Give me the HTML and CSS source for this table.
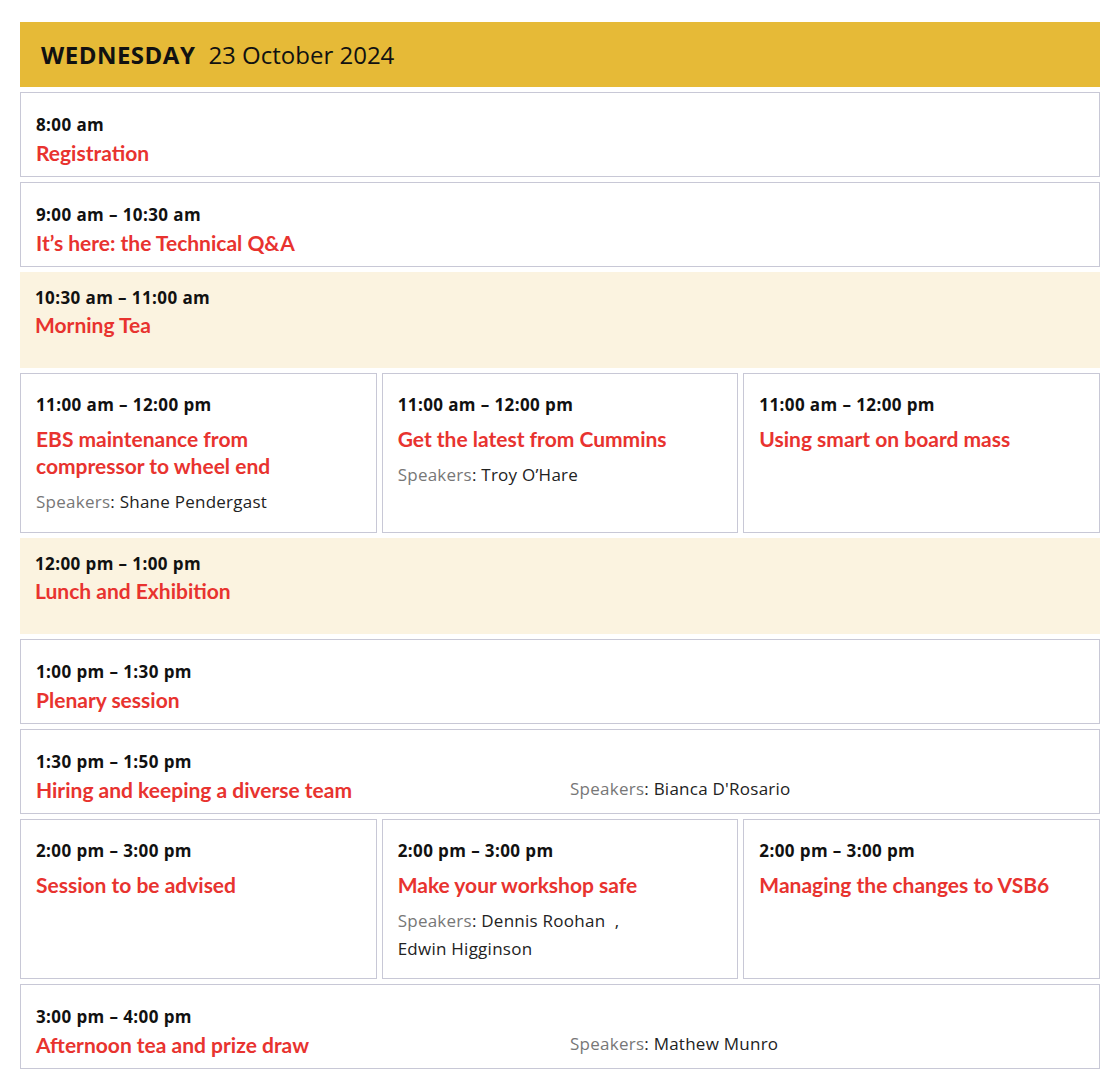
FILE: index.html
```html
<!DOCTYPE html>
<html lang="en">
<head>
<meta charset="utf-8">
<title>Program – Wednesday</title>
<link rel="stylesheet" href="styles.css">
</head>
<body>
<div class="day">
  <div class="day-head"><span class="dow">WEDNESDAY</span><span class="date">23 October 2024</span></div>

  <div class="slot full">
    <div class="time">8:00 am</div>
    <div class="title">Registration</div>
  </div>

  <div class="slot full">
    <div class="time">9:00 am – 10:30 am</div>
    <div class="title">It’s here: the Technical Q&amp;A</div>
  </div>

  <div class="slot brk">
    <div class="time">10:30 am – 11:00 am</div>
    <div class="title">Morning Tea</div>
  </div>

  <div class="cols">
    <div class="slot col">
      <div class="time">11:00 am – 12:00 pm</div>
      <div class="title">EBS maintenance from<br>compressor to wheel end</div>
      <div class="speakers"><span class="lbl">Speakers</span>: Shane Pendergast</div>
    </div>
    <div class="slot col">
      <div class="time">11:00 am – 12:00 pm</div>
      <div class="title">Get the latest from Cummins</div>
      <div class="speakers"><span class="lbl">Speakers</span>: Troy O’Hare</div>
    </div>
    <div class="slot col">
      <div class="time">11:00 am – 12:00 pm</div>
      <div class="title">Using smart on board mass</div>
    </div>
  </div>

  <div class="slot brk">
    <div class="time">12:00 pm – 1:00 pm</div>
    <div class="title">Lunch and Exhibition</div>
  </div>

  <div class="slot full">
    <div class="time">1:00 pm – 1:30 pm</div>
    <div class="title">Plenary session</div>
  </div>

  <div class="slot full split">
    <div class="main">
      <div class="time">1:30 pm – 1:50 pm</div>
      <div class="title">Hiring and keeping a diverse team</div>
    </div>
    <div class="speakers"><span class="lbl">Speakers</span>: Bianca D'Rosario</div>
  </div>

  <div class="cols">
    <div class="slot col">
      <div class="time">2:00 pm – 3:00 pm</div>
      <div class="title">Session to be advised</div>
    </div>
    <div class="slot col">
      <div class="time">2:00 pm – 3:00 pm</div>
      <div class="title">Make your workshop safe</div>
      <div class="speakers"><span class="lbl">Speakers</span>: Dennis Roohan &nbsp;,<br>Edwin Higginson</div>
    </div>
    <div class="slot col">
      <div class="time">2:00 pm – 3:00 pm</div>
      <div class="title">Managing the changes to VSB6</div>
    </div>
  </div>

  <div class="slot full split">
    <div class="main">
      <div class="time">3:00 pm – 4:00 pm</div>
      <div class="title">Afternoon tea and prize draw</div>
    </div>
    <div class="speakers"><span class="lbl">Speakers</span>: Mathew Munro</div>
  </div>
</div>
</body>
</html>
```

FILE: styles.css
```css
* { box-sizing: border-box; }
body {
  margin: 0;
  background: #fff;
  font-family: "Open Sans", "Noto Sans", sans-serif;
  color: #111;
}
.day {
  width: 1080px;
  margin: 22px 0 0 20px;
  display: flex;
  flex-direction: column;
  gap: 5px;
}
.day-head {
  height: 65px;
  background: #E6BA37;
  padding-left: 21px;
  display: flex;
  align-items: center;
  gap: 13px;
  font-size: 24px;
  color: #111;
}
.dow { font-weight: 700; letter-spacing: 0.5px; }
.date { font-weight: 400; }

.slot {
  background: #fff;
  border: 1px solid #C8C8D6;
  padding: 20px 15px 9px 15px;
}
.time {
  font-size: 17px;
  font-weight: 700;
  line-height: 24px;
  letter-spacing: 0.4px;
  color: #111;
}
.title {
  font-family: "Lato", sans-serif;
  font-weight: 700;
  font-size: 21px;
  line-height: 28px;
  color: #E8332F;
  margin-top: 2px;
}
.speakers {
  font-size: 17px;
  line-height: 26px;
  letter-spacing: 0.25px;
  color: #222;
}
.lbl { color: #777; }

.brk {
  border: none;
  background: #FBF3E0;
  padding: 14px 15px 29px 15px;
}
.brk .title { margin-top: 1px; }

.cols {
  display: grid;
  grid-template-columns: 1fr 1fr 1fr;
  gap: 5px;
}
.col { min-height: 160px; padding: 19px 15px 15px 15px; }
.col .title { margin-top: 8px; line-height: 27px; }
.col .speakers { margin-top: 9px; line-height: 28px; }

.split {
  display: grid;
  grid-template-columns: 1fr 1fr;
  column-gap: 20px;
}
.split .speakers { align-self: end; margin-bottom: 2px; }
```
